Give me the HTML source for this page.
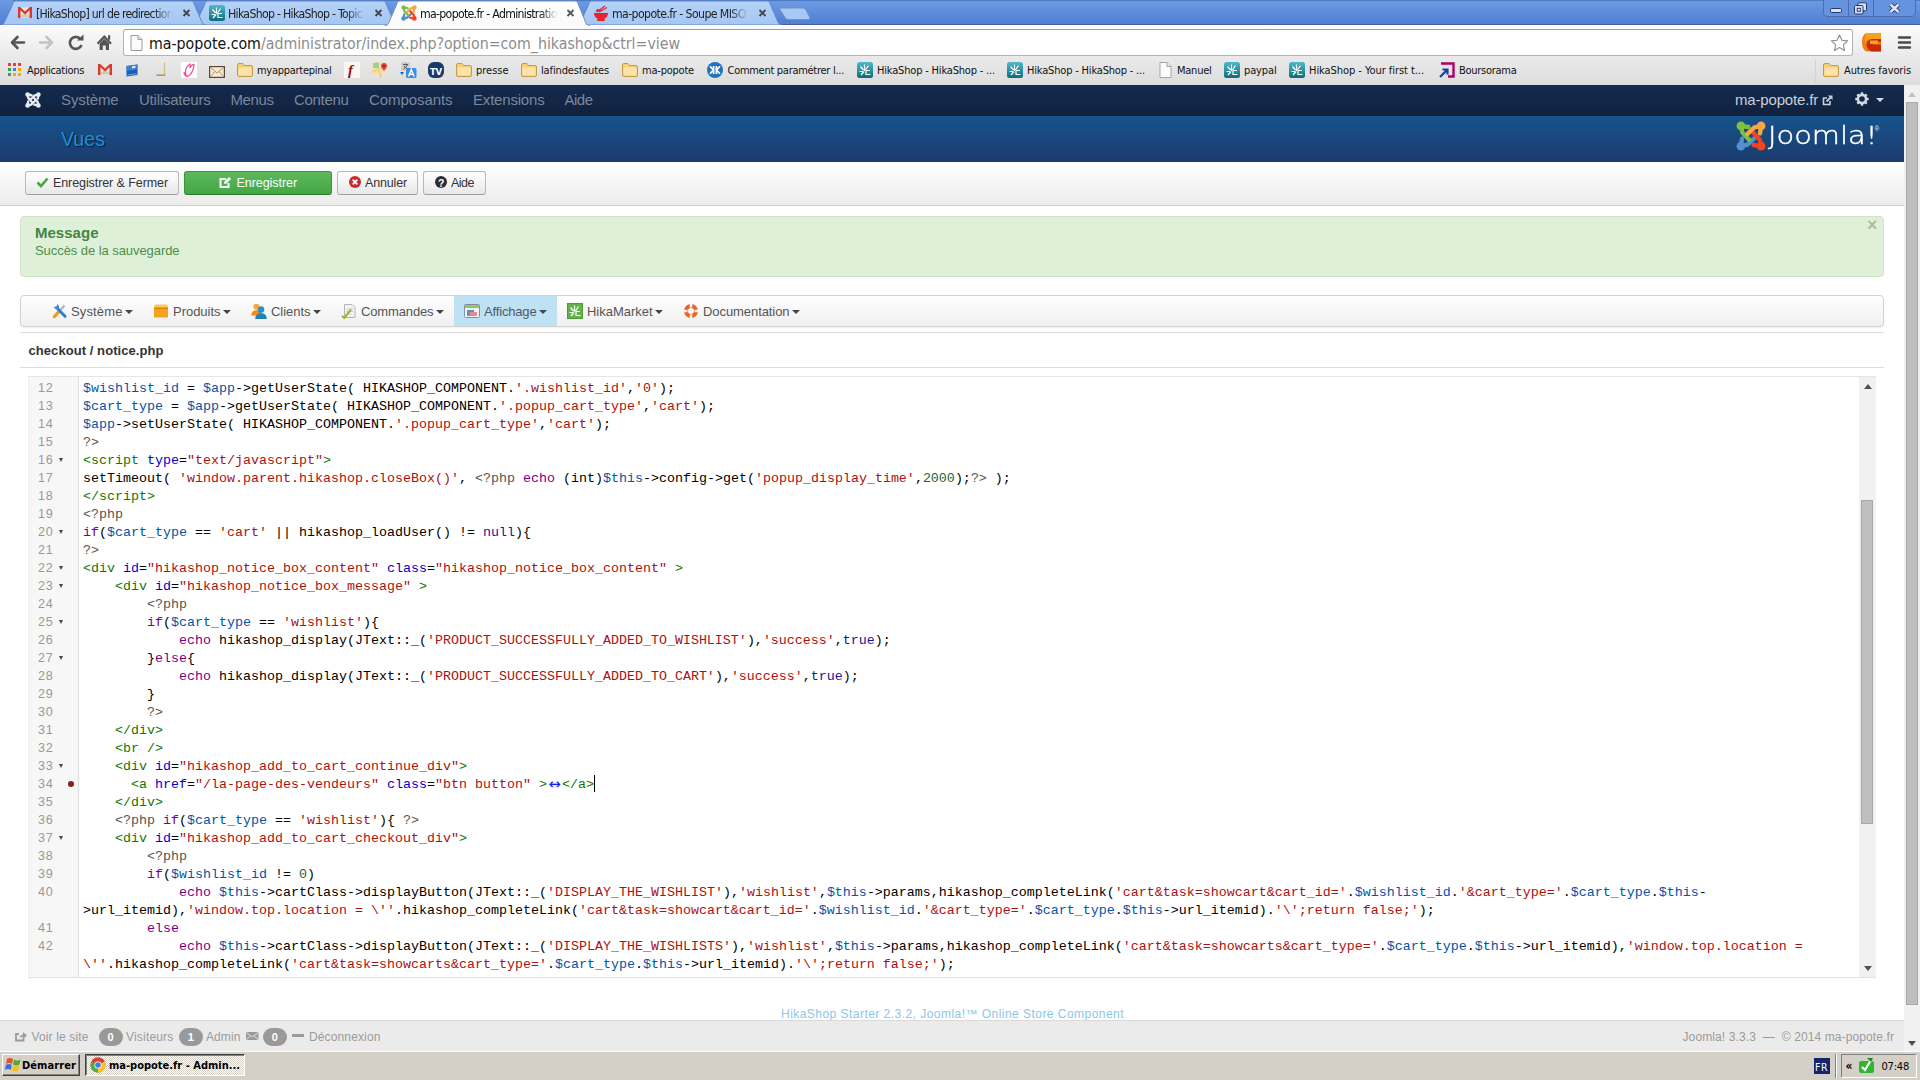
<!DOCTYPE html>
<html lang="fr">
<head>
<meta charset="utf-8">
<title>ma-popote.fr - Administration</title>
<style>
*{box-sizing:border-box;margin:0;padding:0}
html,body{width:1920px;height:1080px;overflow:hidden;background:#fff}
body{position:relative;font-family:"Liberation Sans",Arial,sans-serif;font-size:13px;color:#333}
.abs,.tx,svg.ic{position:absolute}
.tx{white-space:pre}
/* browser chrome */
#tabstrip{left:0;top:0;width:1920px;height:25px;background:linear-gradient(#6d9be3,#4f7ed3)}
#navtool{left:0;top:25px;width:1920px;height:31px;background:linear-gradient(#fcfcfc,#eaeaea)}
#bmbar{left:0;top:56px;width:1920px;height:29px;background:linear-gradient(#eaeaea,#dddddd)}
#url{left:123px;top:29px;width:1730px;height:27px;background:#fff;border:1px solid #b4b4b4;border-top-color:#9e9e9e;border-radius:3px}
/* joomla */
#jnav{left:0;top:85px;width:1904px;height:31px;background:linear-gradient(#142b50,#10213c)}
#jhead{left:0;top:116px;width:1904px;height:46px;background:linear-gradient(#17538c,#1b3b6d)}
#jsub{left:0;top:162px;width:1904px;height:44px;background:linear-gradient(#ffffff,#ececec);border-bottom:1px solid #d0d0d0}
.btn{height:24px;top:171px;border:1px solid #b8b8b8;border-bottom-color:#a0a0a0;border-radius:3px;background:linear-gradient(#ffffff,#e8e8e8)}
.btn.g{border-color:#3f9a3f #3b933b #2f7d2f;background:linear-gradient(#5cb85c,#44a744)}
#alert{left:20px;top:216px;width:1864px;height:61px;background:#dff0d8;border:1px solid #d1e5c4;border-radius:4px}
#hmenu{left:20px;top:295px;width:1864px;height:32px;border:1px solid #d2d2d2;border-radius:4px;background:linear-gradient(#ffffff,#f0f0f0);box-shadow:0 1px 2px rgba(0,0,0,.06)}
#hact{left:454px;top:296px;width:103px;height:30px;background:#bfe1f4}
.hl{height:1px;background:#dcdcdc;left:20px;width:1864px}
.car{width:0;height:0;border-left:4px solid transparent;border-right:4px solid transparent;border-top:4px solid #444;top:310px}
/* editor */
#ed{left:28px;top:376px;width:1848px;height:602px;border-top:1px solid #e6e6e6;border-bottom:1px solid #e2e2e2;background:#fff;overflow:hidden}
#gut{left:0;top:0;width:51px;height:600px;background:#f7f7f7;border-right:1px solid #ddd;border-left:1px solid #eee}
.ln{position:absolute;left:0;width:25.5px;text-align:right;font-size:12.6px;line-height:18px;color:#999;height:18px;letter-spacing:.7px;white-space:nowrap;margin-top:-1px}
.fd{position:absolute;left:31px;width:0;height:0;border-left:2.75px solid transparent;border-right:2.75px solid transparent;border-top:4px solid #444;margin-top:6px}
.dot{position:absolute;left:40px;width:6.4px;height:6.4px;border-radius:4px;background:#8b1c1c}
.cl{position:absolute;left:55px;font-family:"Liberation Mono",monospace;font-size:13.3333px;line-height:18px;height:18px;white-space:pre;color:#000}
.v{color:#0055aa}.s{color:#aa1111}.k{color:#770088}.t{color:#117700}.a{color:#0000cc}.m{color:#555555}.n{color:#116644}.at{color:#221199}
.cur{display:inline-block;width:1px;height:17px;background:#000;vertical-align:top;margin-top:-1px}
.hr{font-family:"DejaVu Sans",sans-serif;font-size:14.5px;display:inline-block;width:15px;text-align:center;line-height:16px;height:18px;vertical-align:top;margin-top:0px;color:#1a1aff;text-shadow:0 0 2px #b8b8ff;overflow:hidden}
#esb{left:1831px;top:0;width:17px;height:600px;background:#f1f1f1}
#esbt{left:1833px;top:123px;width:12px;height:324px;background:#bfbfbf;border:1px solid #a9a9a9}
/* status / taskbar */
#status{left:0;top:1020px;width:1904px;height:31px;background:#ebebeb;border-top:1px solid #d9d9d9}
.bdg{top:1028px;height:18px;width:24px;border-radius:9px;background:#999}
#task{left:0;top:1051px;width:1920px;height:29px;background:#d4d0c8;border-top:1px solid #fff}
#vsb{left:1904px;top:85px;width:16px;height:966px;background:#f1f1f1}
#vsbt{left:1906px;top:102px;width:12px;height:903px;background:#bfbfbf;border:1px solid #a9a9a9}
</style>
</head>
<body>
<!-- BROWSER CHROME -->
<div id="tabstrip" class="abs"></div>
<div id="navtool" class="abs"></div>
<div id="bmbar" class="abs"></div>
<svg class="ic" style="left:0;top:0" width="1920" height="26" viewBox="0 0 1920 26">
<defs><linearGradient id="tg" x1="0" y1="0" x2="0" y2="1"><stop offset="0" stop-color="#b6d3fa"/><stop offset="1" stop-color="#a3c6f2"/></linearGradient>
<linearGradient id="ta" x1="0" y1="0" x2="0" y2="1"><stop offset="0" stop-color="#ffffff"/><stop offset="1" stop-color="#fafafa"/></linearGradient></defs>
<rect x="0" y="24" width="1920" height="1" fill="#41629f"/>
<rect x="13" y="0" width="1907" height="0.8" fill="#4670bc"/>
<path d="M576.5,25 C579,25 580,23.5 581,21 L588,6 C589,3 589.5,1 592,1 L767,1 C769.5,1 770,3 771,6 L777.5,21 C778.5,23.5 779.5,25 782,25 Z" fill="url(#tg)" stroke="#6389c9" stroke-width="1"/>
<path d="M192.5,25 C195,25 196,23.5 197,21 L204,6 C205,3 205.5,1 208,1 L383,1 C385.5,1 386,3 387,6 L393.5,21 C394.5,23.5 395.5,25 398,25 Z" fill="url(#tg)" stroke="#6389c9" stroke-width="1"/>
<path d="M0.5,25 C3,25 4,23.5 5,21 L12,6 C13,3 13.5,1 16,1 L191,1 C193.5,1 194,3 195,6 L201.5,21 C202.5,23.5 203.5,25 206,25 Z" fill="url(#tg)" stroke="#6389c9" stroke-width="1"/>
<path d="M780.5,8 L803,8 Q805,8 806,10 L810,18 Q810.5,19.5 808.5,19.5 L788,19.5 Q786,19.5 785,17.5 L780,9.5 Q779.5,8 780.5,8Z" fill="#a9c9f4" stroke="#6b8fcd" stroke-width="1"/>
<rect x="0" y="25" width="1920" height="1" fill="#fff"/>
<path d="M384.5,26 C387,26 388,24.5 389,22 L396,6 C397,3 397.5,1 400,1 L575,1 C577.5,1 578,3 579,6 L585.5,22 C586.5,24.5 587.5,26 590,26 Z" fill="url(#ta)" stroke="#6f8fbe" stroke-width="1"/>
<rect x="387" y="25" width="201" height="1.5" fill="#fbfbfb"/>
<path d="M1823.5,0 V13 Q1823.5,16.5 1827,16.5 H1912 Q1915.5,16.5 1915.5,13 V0" fill="#6593df" stroke="#4a6db0" stroke-width="1"/>
<path d="M1848.5,0V16 M1873.5,0V16" stroke="#4a6db0" stroke-width="1"/>
<rect x="1830.5" y="8.5" width="11" height="4" rx="1.2" fill="#d5e2f8" stroke="#22386a" stroke-width="1"/>
<rect x="1858" y="2.8" width="8.5" height="8" rx="1" fill="#d5e2f8" stroke="#22386a" stroke-width="1"/><rect x="1854.5" y="5.5" width="8.5" height="8.5" rx="1" fill="#d5e2f8" stroke="#22386a" stroke-width="1"/><rect x="1857.3" y="8.3" width="3" height="3" fill="#eef3fc" stroke="#22386a" stroke-width="1"/>
<path d="M1890.5,4.5 L1898.5,12 M1898.5,4.5 L1890.5,12" stroke="#22386a" stroke-width="4.4" fill="none"/><path d="M1890.5,4.5 L1898.5,12 M1898.5,4.5 L1890.5,12" stroke="#dbe6f9" stroke-width="2.4" fill="none"/>
<path d="M183.5,10 l6,6 m0,-6 l-6,6" stroke="#444" stroke-width="1.8" fill="none"/>
<path d="M375.5,10 l6,6 m0,-6 l-6,6" stroke="#444" stroke-width="1.8" fill="none"/>
<path d="M567.5,10 l6,6 m0,-6 l-6,6" stroke="#555" stroke-width="1.8" fill="none"/>
<path d="M759.5,10 l6,6 m0,-6 l-6,6" stroke="#444" stroke-width="1.8" fill="none"/>
</svg>
<svg class="ic" style="left:18px;top:7px" width="14" height="11.2" viewBox="0 0 15 12"><rect x="0.5" y="0.5" width="14" height="11" fill="#ece8dc"/><path d="M1,11 L7.5,5.5 L14,11Z" fill="#cfc9b8"/><path d="M0,12V0h2.2l5.3,4.8L12.8,0H15v12h-2.6V3.6L7.5,8 2.6,3.6V12z" fill="#d8392b"/></svg><svg class="ic" style="left:209px;top:5px" width="16" height="16" viewBox="0 0 16 16"><defs><linearGradient id="hk209" x1="0" y1="0" x2="0" y2="1"><stop offset="0" stop-color="#52b8c8"/><stop offset="1" stop-color="#0d6c7c"/></linearGradient></defs><rect width="16" height="16" rx="2.5" fill="url(#hk209)"/><path d="M7.5,2.5 V9 M3.5,4.5 L6.5,8 M11.5,3.5 L8.5,8 M2.5,9.5 H6 M7,9.5 L4,13 M9,8.5 V12.5 H13.5 M9,8.5H13" stroke="#fff" stroke-width="1.2" fill="none"/></svg><svg class="ic" style="left:401px;top:5px" width="16" height="16" viewBox="0 0 16 16"><path d="M2.6,13.4 L3.2,9.4 M2.6,13.4 L6.2,12.6 L10,9" stroke="#5091cd" stroke-width="2.3" stroke-linecap="round" stroke-linejoin="round" fill="none"/><circle cx="2.6" cy="13.4" r="2.3" fill="#5091cd"/><path d="M2.6,2.6 L6.6,3.2 M2.6,2.6 L3.4,6.2 L7,10" stroke="#7ac143" stroke-width="2.3" stroke-linecap="round" stroke-linejoin="round" fill="none"/><circle cx="2.6" cy="2.6" r="2.3" fill="#7ac143"/><path d="M13.4,13.4 L9.4,12.8 M13.4,13.4 L12.6,9.8 L9,6" stroke="#f44321" stroke-width="2.3" stroke-linecap="round" stroke-linejoin="round" fill="none"/><circle cx="13.4" cy="13.4" r="2.3" fill="#f44321"/><path d="M13.4,2.6 L12.8,6.6 M13.4,2.6 L9.8,3.4 L6,7" stroke="#f9a541" stroke-width="2.3" stroke-linecap="round" stroke-linejoin="round" fill="none"/><circle cx="13.4" cy="2.6" r="2.3" fill="#f9a541"/></svg><svg class="ic" style="left:593px;top:5px" width="16" height="16" viewBox="0 0 16 16"><path d="M1,8 H15 C15,12 12,14.5 8,14.5 C4,14.5 1,12 1,8Z" fill="#e8232b"/><rect x="4" y="14" width="8" height="2" rx="1" fill="#e8232b"/><path d="M4,7 L12,1 M6,7 L14,2.5" stroke="#e8232b" stroke-width="1.3"/><path d="M3,6.5 Q5,3 7.5,6.5" stroke="#e8232b" stroke-width="1.5" fill="none"/></svg>
<div class="tx" style="left:36px;top:5.68px;font-family:'DejaVu Sans Condensed','DejaVu Sans',sans-serif;font-size:12.2px;line-height:16px;height:16px;letter-spacing:-0.723px;width:137px;overflow:hidden;color:#222;-webkit-mask-image:linear-gradient(90deg,#000 118px,transparent 137px);">[HikaShop] url de redirection</div><div class="tx" style="left:228px;top:5.68px;font-family:'DejaVu Sans Condensed','DejaVu Sans',sans-serif;font-size:12.2px;line-height:16px;height:16px;letter-spacing:-0.692px;width:137px;overflow:hidden;color:#222;-webkit-mask-image:linear-gradient(90deg,#000 118px,transparent 137px);">HikaShop - HikaShop - Topic:</div><div class="tx" style="left:420px;top:5.68px;font-family:'DejaVu Sans Condensed','DejaVu Sans',sans-serif;font-size:12.2px;line-height:16px;height:16px;letter-spacing:-0.680px;width:138px;overflow:hidden;color:#111;-webkit-mask-image:linear-gradient(90deg,#000 120px,transparent 138px);">ma-popote.fr - Administration</div><div class="tx" style="left:612px;top:5.68px;font-family:'DejaVu Sans Condensed','DejaVu Sans',sans-serif;font-size:12.2px;line-height:16px;height:16px;letter-spacing:-0.594px;width:138px;overflow:hidden;color:#222;-webkit-mask-image:linear-gradient(90deg,#000 118px,transparent 136px);">ma-popote.fr - Soupe MISO -</div>
<svg class="ic" style="left:0;top:26px" width="124" height="31" viewBox="0 26 124 31"><path d="M24,42.5 H13 M17.5,37 L12,42.5 L17.5,48" stroke="#555" stroke-width="2.6" fill="none" stroke-linecap="round" stroke-linejoin="round"/><path d="M40,42.5 H51 M46.5,37 L52,42.5 L46.5,48" stroke="#c4c4c4" stroke-width="2.6" fill="none" stroke-linecap="round" stroke-linejoin="round"/><path d="M80.5,39 A6,6 0 1 0 81.5,45" stroke="#555" stroke-width="2.6" fill="none"/><path d="M77,40.5 H83.5 V34.5Z" fill="#555"/><path d="M97.6,43.8 L104.3,36.6 L111,43.8" stroke="#555" stroke-width="2.3" fill="none" stroke-linejoin="miter"/><path d="M99.6,43.5 L104.3,38.8 L109,43.5 V50 H105.8 V45.5 H102.8 V50 H99.6Z" fill="#555"/><rect x="108" y="35.2" width="2.2" height="4.5" fill="#555"/></svg>
<div id="url" class="abs"></div>
<svg class="ic" style="left:130px;top:35px" width="13" height="16" viewBox="0 0 13 16"><path d="M1,0.5 H8 L12,4.5 V15.5 H1Z" fill="#fdfdfd" stroke="#9a9a9a" stroke-width="1"/><path d="M8,0.5 V4.5 H12" fill="#e4e4e4" stroke="#9a9a9a" stroke-width="1"/></svg><div class="tx" style="left:149px;top:32.93px;font-family:'DejaVu Sans Condensed','DejaVu Sans',sans-serif;font-size:15.8px;line-height:21px;height:21px;letter-spacing:-0.028px;color:#111;">ma-popote.com<span style="color:#8c8c8c">/administrator/index.php?option=com_hikashop&amp;ctrl=view</span></div>
<svg class="ic" style="left:1828px;top:32px" width="90" height="24" viewBox="1828 32 90 24"><path d="M1839.5,35 L1841.9,40.3 L1847.6,40.9 L1843.3,44.8 L1844.5,50.4 L1839.5,47.5 L1834.5,50.4 L1835.7,44.8 L1831.4,40.9 L1837.1,40.3Z" fill="#fff" stroke="#8e8e8e" stroke-width="1.1" stroke-linejoin="round"/><path d="M1866,33 H1881 V51.5 H1866 Q1862,49 1862,42 Q1862,35.5 1866,33Z" fill="#f47b10"/><path d="M1866,33 H1881 V39 H1871 Q1866,39 1865,44 Q1864,38 1866,33Z" fill="#f9a01e"/><path d="M1881,39 H1872 Q1866.5,40 1866.5,45 Q1867,50 1872,51.5 H1881 V44.5 H1873 V42 H1881Z" fill="#c62a08"/><rect x="1870" y="40.5" width="8" height="3.4" fill="#f8a21c"/><path d="M1899,37.5 H1910 M1899,42.5 H1910 M1899,47.5 H1910" stroke="#4a4a4a" stroke-width="2.4" stroke-linecap="round"/></svg>
<svg class="ic" style="left:8px;top:63px" width="13" height="13" viewBox="0 0 13 13"><rect x="0" y="0" width="3" height="3" fill="#e8403a"/><rect x="5" y="0" width="3" height="3" fill="#e8403a"/><rect x="10" y="0" width="3" height="3" fill="#e8403a"/><rect x="0" y="5" width="3" height="3" fill="#38a04a"/><rect x="5" y="5" width="3" height="3" fill="#3c82e8"/><rect x="10" y="5" width="3" height="3" fill="#f6a800"/><rect x="0" y="10" width="3" height="3" fill="#38a04a"/><rect x="5" y="10" width="3" height="3" fill="#f6a800"/><rect x="10" y="10" width="3" height="3" fill="#f6a800"/></svg><div class="tx" style="left:27px;top:64.09px;font-family:'DejaVu Sans Condensed','DejaVu Sans',sans-serif;font-size:11px;line-height:14px;height:14px;letter-spacing:-0.288px;color:#111;">Applications</div><svg class="ic" style="left:98px;top:64px" width="14" height="11.2" viewBox="0 0 15 12"><rect x="0.5" y="0.5" width="14" height="11" fill="#ece8dc"/><path d="M1,11 L7.5,5.5 L14,11Z" fill="#cfc9b8"/><path d="M0,12V0h2.2l5.3,4.8L12.8,0H15v12h-2.6V3.6L7.5,8 2.6,3.6V12z" fill="#d8392b"/></svg><svg class="ic" style="left:126px;top:64px" width="13" height="13" viewBox="0 0 13 13"><path d="M0.5,2 L11.5,0.5 V11 L0.5,12.5Z" fill="#1d5cb5"/><path d="M0.5,2 L11.5,0.5 V5 L0.5,7Z" fill="#3a80d4"/><path d="M6,2.3 l3.5,-.6 v2.2 l-3.5,.6z" fill="#d5e6fa"/><path d="M1.5,11 L10.5,9.8" stroke="#6aa2e6" stroke-width="1"/></svg><svg class="ic" style="left:155px;top:62px" width="12" height="16" viewBox="0 0 12 16"><path d="M9.5,0.5 V13" stroke="#d8bd85" stroke-width="1.3" fill="none"/><path d="M1.5,13.2H10.2" stroke="#b8934c" stroke-width="1.6"/></svg><svg class="ic" style="left:181px;top:62px" width="16" height="16" viewBox="0 0 16 16"><rect width="16" height="16" fill="#fff"/><path d="M9,2 Q5,5 4.5,9 Q4,13 6,14.5 Q9,14 11,10 Q13,6 13,2.5 Q11,2 9,6 Q9.5,3 9,2Z M6,14.5 Q3,13 3,10" stroke="#f0529c" stroke-width="1.3" fill="none"/></svg><svg class="ic" style="left:209px;top:66px" width="16" height="12" viewBox="0 0 16 12"><rect x="0.6" y="0.6" width="14.8" height="10.8" fill="#f6ead6" stroke="#5a4632" stroke-width="1.2"/><path d="M1,1 L8,7 L15,1 M1,11 L6,5.5 M15,11 L10,5.5" stroke="#b89468" stroke-width="1" fill="none"/></svg><svg class="ic" style="left:237px;top:63px" width="16" height="14" viewBox="0 0 16 14"><path d="M0.5,2 Q0.5,0.5 2,0.5 H6 L7.5,2.5 H14 Q15.5,2.5 15.5,4 V12 Q15.5,13.5 14,13.5 H2 Q0.5,13.5 0.5,12Z" fill="#f5cf7c" stroke="#c79a45" stroke-width="1"/><path d="M1.5,4.5 H14.5 V12 Q14.5,12.5 14,12.5 H2 Q1.5,12.5 1.5,12Z" fill="#fde4a6"/></svg><div class="tx" style="left:257px;top:64.09px;font-family:'DejaVu Sans Condensed','DejaVu Sans',sans-serif;font-size:11px;line-height:14px;height:14px;letter-spacing:-0.276px;color:#111;">myappartepinal</div><svg class="ic" style="left:344px;top:62px" width="16" height="16" viewBox="0 0 16 16"><rect width="16" height="16" fill="#fbf6f2"/></svg><div class="tx" style="left:348px;top:59.94px;font-family:'Liberation Serif',serif;font-size:15px;line-height:20px;height:20px;font-weight:700;color:#8e1010;font-style:italic;">f</div><svg class="ic" style="left:372px;top:62px" width="16" height="16" viewBox="0 0 16 16"><rect width="16" height="16" rx="2" fill="#e6e2d6"/><path d="M0,10 L16,4 M5,0 L9,16" stroke="#f7d560" stroke-width="2.2"/><rect x="1" y="1" width="6" height="5" fill="#a5cf8c"/><path d="M12,1 a3,3 0 0 1 3,3 q0,2 -3,5 q-3,-3 -3,-5 a3,3 0 0 1 3,-3z" fill="#e0443a"/><circle cx="12" cy="4" r="1.1" fill="#7a1a14"/></svg><svg class="ic" style="left:400px;top:62px" width="17" height="16" viewBox="0 0 17 16"><rect x="1" y="0" width="9" height="9" rx="1" fill="#cfcfcf"/><path d="M3,2.5H8M5.5,1.5V3M3.5,7Q6,6 7.5,2.5M4,4Q5.5,6.5 8,7" stroke="#555" stroke-width="1" fill="none"/><rect x="6" y="6" width="10.5" height="10" rx="1.5" fill="#3c8fe8"/><path d="M8.5,14.5 L11.3,7.5 L14,14.5 M9.5,12.3H13" stroke="#fff" stroke-width="1.4" fill="none"/><path d="M0,10 l4,0 l-2,3z" fill="#1d64c2"/></svg><svg class="ic" style="left:428px;top:62px" width="16" height="16" viewBox="0 0 16 16"><rect width="16" height="16" rx="6" fill="#17396f"/></svg><div class="tx" style="left:430px;top:65.61px;font-family:'DejaVu Sans Condensed','DejaVu Sans',sans-serif;font-size:9.5px;line-height:12px;height:12px;font-weight:700;letter-spacing:-0.227px;color:#fff;">TV</div><svg class="ic" style="left:456px;top:63px" width="16" height="14" viewBox="0 0 16 14"><path d="M0.5,2 Q0.5,0.5 2,0.5 H6 L7.5,2.5 H14 Q15.5,2.5 15.5,4 V12 Q15.5,13.5 14,13.5 H2 Q0.5,13.5 0.5,12Z" fill="#f5cf7c" stroke="#c79a45" stroke-width="1"/><path d="M1.5,4.5 H14.5 V12 Q14.5,12.5 14,12.5 H2 Q1.5,12.5 1.5,12Z" fill="#fde4a6"/></svg><div class="tx" style="left:476px;top:64.09px;font-family:'DejaVu Sans Condensed','DejaVu Sans',sans-serif;font-size:11px;line-height:14px;height:14px;letter-spacing:-0.018px;color:#111;">presse</div><svg class="ic" style="left:521px;top:63px" width="16" height="14" viewBox="0 0 16 14"><path d="M0.5,2 Q0.5,0.5 2,0.5 H6 L7.5,2.5 H14 Q15.5,2.5 15.5,4 V12 Q15.5,13.5 14,13.5 H2 Q0.5,13.5 0.5,12Z" fill="#f5cf7c" stroke="#c79a45" stroke-width="1"/><path d="M1.5,4.5 H14.5 V12 Q14.5,12.5 14,12.5 H2 Q1.5,12.5 1.5,12Z" fill="#fde4a6"/></svg><div class="tx" style="left:541px;top:64.09px;font-family:'DejaVu Sans Condensed','DejaVu Sans',sans-serif;font-size:11px;line-height:14px;height:14px;letter-spacing:-0.129px;color:#111;">lafindesfautes</div><svg class="ic" style="left:622px;top:63px" width="16" height="14" viewBox="0 0 16 14"><path d="M0.5,2 Q0.5,0.5 2,0.5 H6 L7.5,2.5 H14 Q15.5,2.5 15.5,4 V12 Q15.5,13.5 14,13.5 H2 Q0.5,13.5 0.5,12Z" fill="#f5cf7c" stroke="#c79a45" stroke-width="1"/><path d="M1.5,4.5 H14.5 V12 Q14.5,12.5 14,12.5 H2 Q1.5,12.5 1.5,12Z" fill="#fde4a6"/></svg><div class="tx" style="left:642px;top:64.09px;font-family:'DejaVu Sans Condensed','DejaVu Sans',sans-serif;font-size:11px;line-height:14px;height:14px;letter-spacing:-0.214px;color:#111;">ma-popote</div><svg class="ic" style="left:707px;top:62px" width="16" height="16" viewBox="0 0 16 16"><circle cx="8" cy="8" r="8" fill="#1f74bd"/><path d="M6.6,4V12M9.4,4V12M3,4.2L6.4,8L3,11.8M13,4.2L9.6,8L13,11.8" stroke="#fff" stroke-width="1.7" fill="none"/></svg><div class="tx" style="left:727.5px;top:64.09px;font-family:'DejaVu Sans Condensed','DejaVu Sans',sans-serif;font-size:11px;line-height:14px;height:14px;letter-spacing:-0.284px;color:#111;">Comment paramétrer l...</div><svg class="ic" style="left:857px;top:62px" width="16" height="16" viewBox="0 0 16 16"><defs><linearGradient id="hk857" x1="0" y1="0" x2="0" y2="1"><stop offset="0" stop-color="#52b8c8"/><stop offset="1" stop-color="#0d6c7c"/></linearGradient></defs><rect width="16" height="16" rx="2.5" fill="url(#hk857)"/><path d="M7.5,2.5 V9 M3.5,4.5 L6.5,8 M11.5,3.5 L8.5,8 M2.5,9.5 H6 M7,9.5 L4,13 M9,8.5 V12.5 H13.5 M9,8.5H13" stroke="#fff" stroke-width="1.2" fill="none"/></svg><div class="tx" style="left:877px;top:64.09px;font-family:'DejaVu Sans Condensed','DejaVu Sans',sans-serif;font-size:11px;line-height:14px;height:14px;letter-spacing:-0.181px;color:#111;">HikaShop - HikaShop - ...</div><svg class="ic" style="left:1007px;top:62px" width="16" height="16" viewBox="0 0 16 16"><defs><linearGradient id="hk1007" x1="0" y1="0" x2="0" y2="1"><stop offset="0" stop-color="#52b8c8"/><stop offset="1" stop-color="#0d6c7c"/></linearGradient></defs><rect width="16" height="16" rx="2.5" fill="url(#hk1007)"/><path d="M7.5,2.5 V9 M3.5,4.5 L6.5,8 M11.5,3.5 L8.5,8 M2.5,9.5 H6 M7,9.5 L4,13 M9,8.5 V12.5 H13.5 M9,8.5H13" stroke="#fff" stroke-width="1.2" fill="none"/></svg><div class="tx" style="left:1027px;top:64.09px;font-family:'DejaVu Sans Condensed','DejaVu Sans',sans-serif;font-size:11px;line-height:14px;height:14px;letter-spacing:-0.181px;color:#111;">HikaShop - HikaShop - ...</div><svg class="ic" style="left:1159px;top:62px" width="13" height="16" viewBox="0 0 13 16"><path d="M1,0.5 H8 L12,4.5 V15.5 H1Z" fill="#fdfdfd" stroke="#a5a5a5" stroke-width="1"/><path d="M8,0.5 V4.5 H12" fill="#e8e8e8" stroke="#a5a5a5" stroke-width="1"/></svg><div class="tx" style="left:1177px;top:64.09px;font-family:'DejaVu Sans Condensed','DejaVu Sans',sans-serif;font-size:11px;line-height:14px;height:14px;letter-spacing:-0.250px;color:#111;">Manuel</div><svg class="ic" style="left:1224px;top:62px" width="16" height="16" viewBox="0 0 16 16"><defs><linearGradient id="hk1224" x1="0" y1="0" x2="0" y2="1"><stop offset="0" stop-color="#52b8c8"/><stop offset="1" stop-color="#0d6c7c"/></linearGradient></defs><rect width="16" height="16" rx="2.5" fill="url(#hk1224)"/><path d="M7.5,2.5 V9 M3.5,4.5 L6.5,8 M11.5,3.5 L8.5,8 M2.5,9.5 H6 M7,9.5 L4,13 M9,8.5 V12.5 H13.5 M9,8.5H13" stroke="#fff" stroke-width="1.2" fill="none"/></svg><div class="tx" style="left:1244px;top:64.09px;font-family:'DejaVu Sans Condensed','DejaVu Sans',sans-serif;font-size:11px;line-height:14px;height:14px;letter-spacing:-0.135px;color:#111;">paypal</div><svg class="ic" style="left:1289px;top:62px" width="16" height="16" viewBox="0 0 16 16"><defs><linearGradient id="hk1289" x1="0" y1="0" x2="0" y2="1"><stop offset="0" stop-color="#52b8c8"/><stop offset="1" stop-color="#0d6c7c"/></linearGradient></defs><rect width="16" height="16" rx="2.5" fill="url(#hk1289)"/><path d="M7.5,2.5 V9 M3.5,4.5 L6.5,8 M11.5,3.5 L8.5,8 M2.5,9.5 H6 M7,9.5 L4,13 M9,8.5 V12.5 H13.5 M9,8.5H13" stroke="#fff" stroke-width="1.2" fill="none"/></svg><div class="tx" style="left:1309px;top:64.09px;font-family:'DejaVu Sans Condensed','DejaVu Sans',sans-serif;font-size:11px;line-height:14px;height:14px;letter-spacing:-0.056px;color:#111;">HikaShop - Your first t...</div><svg class="ic" style="left:1439px;top:62px" width="16" height="16" viewBox="0 0 16 16"><path d="M2,1.5 H14.5 V14.5 H9" stroke="#b0006a" stroke-width="2.4" fill="none"/><path d="M1,15 L8,8 M3.5,7.5 H8.5 V12.5" stroke="#1a3fa0" stroke-width="2.2" fill="none"/></svg><div class="tx" style="left:1459px;top:64.09px;font-family:'DejaVu Sans Condensed','DejaVu Sans',sans-serif;font-size:11px;line-height:14px;height:14px;letter-spacing:-0.273px;color:#111;">Boursorama</div><div class="abs" style="left:1815px;top:59px;width:1px;height:24px;background:#cfd4dc"></div><svg class="ic" style="left:1823px;top:63px" width="16" height="14" viewBox="0 0 16 14"><path d="M0.5,2 Q0.5,0.5 2,0.5 H6 L7.5,2.5 H14 Q15.5,2.5 15.5,4 V12 Q15.5,13.5 14,13.5 H2 Q0.5,13.5 0.5,12Z" fill="#f5cf7c" stroke="#c79a45" stroke-width="1"/><path d="M1.5,4.5 H14.5 V12 Q14.5,12.5 14,12.5 H2 Q1.5,12.5 1.5,12Z" fill="#fde4a6"/></svg><div class="tx" style="left:1844px;top:64.09px;font-family:'DejaVu Sans Condensed','DejaVu Sans',sans-serif;font-size:11px;line-height:14px;height:14px;letter-spacing:-0.112px;color:#111;">Autres favoris</div>
<!-- JOOMLA -->
<div id="jnav" class="abs"></div>
<div id="jhead" class="abs"></div>
<div id="jsub" class="abs"></div>
<svg class="ic" style="left:25px;top:92px" width="16" height="16" viewBox="0 0 16 16"><path d="M2.6,13.4 L3.2,9.4 M2.6,13.4 L6.2,12.6 L10,9" stroke="#e8ebf0" stroke-width="2.4" stroke-linecap="round" stroke-linejoin="round" fill="none"/><circle cx="2.6" cy="13.4" r="2.3" fill="#e8ebf0"/><path d="M2.6,2.6 L6.6,3.2 M2.6,2.6 L3.4,6.2 L7,10" stroke="#e8ebf0" stroke-width="2.4" stroke-linecap="round" stroke-linejoin="round" fill="none"/><circle cx="2.6" cy="2.6" r="2.3" fill="#e8ebf0"/><path d="M13.4,13.4 L9.4,12.8 M13.4,13.4 L12.6,9.8 L9,6" stroke="#e8ebf0" stroke-width="2.4" stroke-linecap="round" stroke-linejoin="round" fill="none"/><circle cx="13.4" cy="13.4" r="2.3" fill="#e8ebf0"/><path d="M13.4,2.6 L12.8,6.6 M13.4,2.6 L9.8,3.4 L6,7" stroke="#e8ebf0" stroke-width="2.4" stroke-linecap="round" stroke-linejoin="round" fill="none"/><circle cx="13.4" cy="2.6" r="2.3" fill="#e8ebf0"/></svg><div class="tx" style="left:61px;top:90.30px;font-family:'Liberation Sans',Arial,sans-serif;font-size:15px;line-height:20px;height:20px;letter-spacing:-0.123px;color:#7c879b;">Système</div><div class="tx" style="left:139px;top:90.30px;font-family:'Liberation Sans',Arial,sans-serif;font-size:15px;line-height:20px;height:20px;letter-spacing:-0.224px;color:#7c879b;">Utilisateurs</div><div class="tx" style="left:230.5px;top:90.30px;font-family:'Liberation Sans',Arial,sans-serif;font-size:15px;line-height:20px;height:20px;letter-spacing:-0.406px;color:#7c879b;">Menus</div><div class="tx" style="left:294px;top:90.30px;font-family:'Liberation Sans',Arial,sans-serif;font-size:15px;line-height:20px;height:20px;letter-spacing:-0.317px;color:#7c879b;">Contenu</div><div class="tx" style="left:369px;top:90.30px;font-family:'Liberation Sans',Arial,sans-serif;font-size:15px;line-height:20px;height:20px;letter-spacing:-0.072px;color:#7c879b;">Composants</div><div class="tx" style="left:473px;top:90.30px;font-family:'Liberation Sans',Arial,sans-serif;font-size:15px;line-height:20px;height:20px;letter-spacing:-0.188px;color:#7c879b;">Extensions</div><div class="tx" style="left:564.5px;top:90.30px;font-family:'Liberation Sans',Arial,sans-serif;font-size:15px;line-height:20px;height:20px;letter-spacing:-0.508px;color:#7c879b;">Aide</div><div class="tx" style="left:1735px;top:90.30px;font-family:'Liberation Sans',Arial,sans-serif;font-size:15px;line-height:20px;height:20px;letter-spacing:-0.171px;color:#c9d0db;">ma-popote.fr</div><svg class="ic" style="left:1822px;top:95px" width="11" height="11" viewBox="0 0 11 11"><path d="M8,6 V9.5 H1.5 V3 H5" stroke="#c9d0db" stroke-width="1.6" fill="none"/><path d="M4.5,6.5 L9,2" stroke="#c9d0db" stroke-width="1.8"/><path d="M6,0.5 H10.5 V5Z" fill="#c9d0db"/></svg><svg class="ic" style="left:1855px;top:92px" width="14" height="14" viewBox="0 0 14 14"><circle cx="7" cy="7" r="4.1" fill="none" stroke="#d4dae3" stroke-width="2.6"/><path d="M7,0.3V2.5M7,11.5V13.7M0.3,7H2.5M11.5,7H13.7M2.3,2.3L3.8,3.8M10.2,10.2L11.7,11.7M2.3,11.7L3.8,10.2M10.2,3.8L11.7,2.3" stroke="#d4dae3" stroke-width="2.4"/></svg><div class="abs car" style="left:1876px;top:98px;border-top-color:#d4dae3"></div>
<div class="tx" style="left:61px;top:126.74px;font-family:'Liberation Sans',Arial,sans-serif;font-size:19.5px;line-height:25px;height:25px;letter-spacing:0.066px;color:#1b8edb;text-shadow:1px 1px 1px rgba(0,0,0,.65);">Vues</div><svg class="ic" style="left:1735.5px;top:120.5px" width="30" height="30" viewBox="0 0 16 16"><path d="M2.6,13.4 L3.2,9.4 M2.6,13.4 L6.2,12.6 L10,9" stroke="#5091cd" stroke-width="2.3" stroke-linecap="round" stroke-linejoin="round" fill="none"/><circle cx="2.6" cy="13.4" r="2.3" fill="#5091cd"/><path d="M2.6,2.6 L6.6,3.2 M2.6,2.6 L3.4,6.2 L7,10" stroke="#7ac143" stroke-width="2.3" stroke-linecap="round" stroke-linejoin="round" fill="none"/><circle cx="2.6" cy="2.6" r="2.3" fill="#7ac143"/><path d="M13.4,13.4 L9.4,12.8 M13.4,13.4 L12.6,9.8 L9,6" stroke="#f44321" stroke-width="2.3" stroke-linecap="round" stroke-linejoin="round" fill="none"/><circle cx="13.4" cy="13.4" r="2.3" fill="#f44321"/><path d="M13.4,2.6 L12.8,6.6 M13.4,2.6 L9.8,3.4 L6,7" stroke="#f9a541" stroke-width="2.3" stroke-linecap="round" stroke-linejoin="round" fill="none"/><circle cx="13.4" cy="2.6" r="2.3" fill="#f9a541"/></svg><div class="tx" style="left:1768px;top:120.25px;font-family:'DejaVu Sans',sans-serif;font-size:24.7px;line-height:32px;height:32px;font-weight:200;color:#ffffff;transform:scaleX(1.17);transform-origin:0 0;-webkit-text-stroke:0.45px #fff;">Joomla!</div><div class="tx" style="left:1874.5px;top:124.75px;font-family:'Liberation Sans',Arial,sans-serif;font-size:6.5px;line-height:8px;height:8px;color:#dfe8f3;">®</div>
<div class="abs btn" style="left:25px;width:154px"></div><div class="abs btn g" style="left:184px;width:148px"></div><div class="abs btn" style="left:337px;width:81px"></div><div class="abs btn" style="left:423px;width:63px"></div>
<svg class="ic" style="left:36px;top:176px" width="13" height="12" viewBox="0 0 13 12"><path d="M1.5,6.5 L5,10 L11.5,2.5" stroke="#46a546" stroke-width="2.6" fill="none"/></svg><div class="tx" style="left:53px;top:174.67px;font-family:'Liberation Sans',Arial,sans-serif;font-size:12.5px;line-height:16px;height:16px;letter-spacing:-0.085px;color:#333;">Enregistrer &amp; Fermer</div><svg class="ic" style="left:219px;top:176px" width="13" height="13" viewBox="0 0 13 13"><path d="M9.5,7 V11 H1.5 V3 H7" stroke="#fff" stroke-width="2" fill="none"/><path d="M5,8 L5.5,5.5 L10,1 L12,3 L7.5,7.5Z" fill="#fff"/></svg><div class="tx" style="left:236.5px;top:174.67px;font-family:'Liberation Sans',Arial,sans-serif;font-size:12.5px;line-height:16px;height:16px;letter-spacing:-0.058px;color:#fff;">Enregistrer</div><svg class="ic" style="left:349px;top:176px" width="12" height="12" viewBox="0 0 12 12"><circle cx="6" cy="6" r="6" fill="#c92b2b"/><path d="M3.7,3.7 L8.3,8.3 M8.3,3.7 L3.7,8.3" stroke="#fff" stroke-width="1.9"/></svg><div class="tx" style="left:365px;top:174.67px;font-family:'Liberation Sans',Arial,sans-serif;font-size:12.5px;line-height:16px;height:16px;letter-spacing:-0.156px;color:#333;">Annuler</div><svg class="ic" style="left:435px;top:176px" width="12" height="12" viewBox="0 0 12 12"><circle cx="6" cy="6" r="6" fill="#2d2d2d"/></svg><div class="tx" style="left:438px;top:175.86px;font-family:'Liberation Sans',Arial,sans-serif;font-size:10.5px;line-height:14px;height:14px;font-weight:700;color:#fff;">?</div><div class="tx" style="left:451px;top:174.67px;font-family:'Liberation Sans',Arial,sans-serif;font-size:12.5px;line-height:16px;height:16px;letter-spacing:-0.508px;color:#333;">Aide</div>
<div id="alert" class="abs"></div>
<div class="tx" style="left:35px;top:223.30px;font-family:'Liberation Sans',Arial,sans-serif;font-size:15px;line-height:20px;height:20px;font-weight:700;letter-spacing:0.018px;color:#3f8742;">Message</div><div class="tx" style="left:35px;top:242.00px;font-family:'Liberation Sans',Arial,sans-serif;font-size:13px;line-height:17px;height:17px;letter-spacing:-0.065px;color:#4a8f4c;">Succès de la sauvegarde</div><div class="tx" style="left:1867px;top:213.94px;font-family:'Liberation Sans',Arial,sans-serif;font-size:17.5px;line-height:23px;height:23px;font-weight:700;color:#adbba6;">×</div>
<div id="hmenu" class="abs"></div><div id="hact" class="abs"></div>
<svg class="ic" style="left:52px;top:303px" width="16" height="16" viewBox="0 0 16 16"><path d="M12.5,2.5 L6,9.5" stroke="#aeb4bc" stroke-width="2"/><path d="M6.2,9.2 L2.3,13.7" stroke="#f39a1e" stroke-width="3.2" stroke-linecap="round"/><path d="M4.5,4.5 L13,13.3" stroke="#2f7fd0" stroke-width="3" stroke-linecap="round"/><path d="M1.3,3.8 A3.3,3.3 0 0 0 6.6,5.2 A3.3,3.3 0 0 0 5.2,0.9 L5,3.4 L3.4,4.6Z" fill="#3d8ada"/></svg><div class="tx" style="left:71px;top:303.00px;font-family:'Liberation Sans',Arial,sans-serif;font-size:13px;line-height:17px;height:17px;letter-spacing:0.132px;color:#555;">Système</div><div class="abs car" style="left:124.8px;border-top-color:#444"></div><svg class="ic" style="left:153px;top:303px" width="16" height="16" viewBox="0 0 16 16"><path d="M1,4 H15 V14.5 H1Z" fill="#f5a31c"/><path d="M2,1.5 H14 L15,4 H1Z" fill="#fbc65a"/><path d="M1,5.5H15" stroke="#d98208" stroke-width="1"/></svg><div class="tx" style="left:173px;top:303.00px;font-family:'Liberation Sans',Arial,sans-serif;font-size:13px;line-height:17px;height:17px;letter-spacing:-0.025px;color:#555;">Produits</div><div class="abs car" style="left:222.8px;border-top-color:#444"></div><svg class="ic" style="left:251px;top:303px" width="16" height="16" viewBox="0 0 16 16"><circle cx="5.5" cy="3.8" r="3" fill="#f6a63a"/><path d="M0.3,12.5 Q0.3,7.3 5.5,7.3 Q10.7,7.3 10.7,12.5Z" fill="#f08c1e"/><circle cx="10" cy="6.6" r="3.3" fill="#2f8fc4"/><path d="M4.2,16 Q4.2,10.2 10,10.2 Q15.8,10.2 15.8,16Z" fill="#2380b4"/></svg><div class="tx" style="left:271px;top:303.00px;font-family:'Liberation Sans',Arial,sans-serif;font-size:13px;line-height:17px;height:17px;letter-spacing:-0.036px;color:#555;">Clients</div><div class="abs car" style="left:312.8px;border-top-color:#444"></div><svg class="ic" style="left:341px;top:303px" width="16" height="16" viewBox="0 0 16 16"><path d="M3.5,1.5 H11 L14,4.5 V14.5 H3.5Z" fill="#f4f4f4" stroke="#b4b4b4" stroke-width="1"/><path d="M5.5,6H12M5.5,8.5H12M5.5,11H10" stroke="#c9c9c9" stroke-width="1"/><path d="M1,13 L3.5,15 L10,6.5" stroke="#7ab02c" stroke-width="1.8" fill="none"/><path d="M2,15.5 L9,7" stroke="#d8a838" stroke-width="1.2"/></svg><div class="tx" style="left:361px;top:303.00px;font-family:'Liberation Sans',Arial,sans-serif;font-size:13px;line-height:17px;height:17px;letter-spacing:-0.134px;color:#555;">Commandes</div><div class="abs car" style="left:435.8px;border-top-color:#444"></div><svg class="ic" style="left:464px;top:303px" width="16" height="16" viewBox="0 0 16 16"><rect x="0.5" y="1.5" width="15" height="13" rx="1" fill="#f2f6fa" stroke="#7d8fa6" stroke-width="1"/><rect x="1" y="2" width="14" height="3" fill="#9fc25a"/><rect x="3" y="7" width="7" height="6" fill="#5a8fd0"/><rect x="6" y="9" width="7" height="4" fill="#e88a8a"/></svg><div class="tx" style="left:484px;top:303.00px;font-family:'Liberation Sans',Arial,sans-serif;font-size:13px;line-height:17px;height:17px;letter-spacing:-0.163px;color:#4b5968;">Affichage</div><div class="abs car" style="left:538.8px;border-top-color:#3f4a55"></div><svg class="ic" style="left:567px;top:303px" width="16" height="16" viewBox="0 0 16 16"><rect width="16" height="16" fill="#4c9a3a"/><rect x="1" y="1" width="14" height="14" fill="#62b14a"/><path d="M7.5,2.5 V9 M3.5,4.5 L6.5,8 M11.5,3.5 L8.5,8 M2.5,9.5 H6 M7,9.5 L4,13 M9,8.5 V12.5 H13.5 M9,8.5H13" stroke="#fff" stroke-width="1.2" fill="none"/></svg><div class="tx" style="left:587px;top:303.00px;font-family:'Liberation Sans',Arial,sans-serif;font-size:13px;line-height:17px;height:17px;letter-spacing:-0.025px;color:#555;">HikaMarket</div><div class="abs car" style="left:654.8px;border-top-color:#444"></div><svg class="ic" style="left:683px;top:303px" width="16" height="16" viewBox="0 0 16 16"><circle cx="8" cy="8" r="5" fill="none" stroke="#e8622c" stroke-width="4"/><path d="M8,0.5V4.5M8,11.5V15.5M0.5,8H4.5M11.5,8H15.5" stroke="#fdf4ec" stroke-width="2.6"/></svg><div class="tx" style="left:703px;top:303.00px;font-family:'Liberation Sans',Arial,sans-serif;font-size:13px;line-height:17px;height:17px;letter-spacing:-0.073px;color:#555;">Documentation</div><div class="abs car" style="left:791.8px;border-top-color:#444"></div>
<div class="abs hl" style="top:332px"></div><div class="abs hl" style="top:367px"></div>
<div class="tx" style="left:28.5px;top:342.00px;font-family:'Liberation Sans',Arial,sans-serif;font-size:13px;line-height:17px;height:17px;font-weight:700;letter-spacing:0.065px;color:#333;">checkout / notice.php</div>
<!-- EDITOR -->
<div id="ed" class="abs"><div id="gut" class="abs"></div>
<div class="ln" style="top:3px">12</div>
<div class="cl" style="top:3px"><span class="v">$wishlist_id</span> = <span class="v">$app</span>-&gt;getUserState( HIKASHOP_COMPONENT.<span class="s">'.wishlist_id'</span>,<span class="s">'0'</span>);</div>
<div class="ln" style="top:21px">13</div>
<div class="cl" style="top:21px"><span class="v">$cart_type</span> = <span class="v">$app</span>-&gt;getUserState( HIKASHOP_COMPONENT.<span class="s">'.popup_cart_type'</span>,<span class="s">'cart'</span>);</div>
<div class="ln" style="top:39px">14</div>
<div class="cl" style="top:39px"><span class="v">$app</span>-&gt;setUserState( HIKASHOP_COMPONENT.<span class="s">'.popup_cart_type'</span>,<span class="s">'cart'</span>);</div>
<div class="ln" style="top:57px">15</div>
<div class="cl" style="top:57px"><span class="m">?&gt;</span></div>
<div class="ln" style="top:75px">16</div>
<div class="fd" style="top:75px"></div>
<div class="cl" style="top:75px"><span class="t">&lt;script</span> <span class="a">type</span>=<span class="s">"text/javascript"</span><span class="t">&gt;</span></div>
<div class="ln" style="top:93px">17</div>
<div class="cl" style="top:93px">setTimeout( <span class="s">'window.parent.hikashop.closeBox()'</span>, <span class="m">&lt;?php</span> <span class="k">echo</span> (int)<span class="v">$this</span>-&gt;config-&gt;get(<span class="s">'popup_display_time'</span>,<span class="n">2000</span>);<span class="m">?&gt;</span> );</div>
<div class="ln" style="top:111px">18</div>
<div class="cl" style="top:111px"><span class="t">&lt;/script&gt;</span></div>
<div class="ln" style="top:129px">19</div>
<div class="cl" style="top:129px"><span class="m">&lt;?php</span></div>
<div class="ln" style="top:147px">20</div>
<div class="fd" style="top:147px"></div>
<div class="cl" style="top:147px"><span class="k">if</span>(<span class="v">$cart_type</span> == <span class="s">'cart'</span> || hikashop_loadUser() != <span class="at">null</span>){</div>
<div class="ln" style="top:165px">21</div>
<div class="cl" style="top:165px"><span class="m">?&gt;</span></div>
<div class="ln" style="top:183px">22</div>
<div class="fd" style="top:183px"></div>
<div class="cl" style="top:183px"><span class="t">&lt;div</span> <span class="a">id</span>=<span class="s">"hikashop_notice_box_content"</span> <span class="a">class</span>=<span class="s">"hikashop_notice_box_content"</span> <span class="t">&gt;</span></div>
<div class="ln" style="top:201px">23</div>
<div class="fd" style="top:201px"></div>
<div class="cl" style="top:201px">    <span class="t">&lt;div</span> <span class="a">id</span>=<span class="s">"hikashop_notice_box_message"</span> <span class="t">&gt;</span></div>
<div class="ln" style="top:219px">24</div>
<div class="cl" style="top:219px">        <span class="m">&lt;?php</span></div>
<div class="ln" style="top:237px">25</div>
<div class="fd" style="top:237px"></div>
<div class="cl" style="top:237px">        <span class="k">if</span>(<span class="v">$cart_type</span> == <span class="s">'wishlist'</span>){</div>
<div class="ln" style="top:255px">26</div>
<div class="cl" style="top:255px">            <span class="k">echo</span> hikashop_display(JText::_(<span class="s">'PRODUCT_SUCCESSFULLY_ADDED_TO_WISHLIST'</span>),<span class="s">'success'</span>,<span class="at">true</span>);</div>
<div class="ln" style="top:273px">27</div>
<div class="fd" style="top:273px"></div>
<div class="cl" style="top:273px">        }<span class="k">else</span>{</div>
<div class="ln" style="top:291px">28</div>
<div class="cl" style="top:291px">            <span class="k">echo</span> hikashop_display(JText::_(<span class="s">'PRODUCT_SUCCESSFULLY_ADDED_TO_CART'</span>),<span class="s">'success'</span>,<span class="at">true</span>);</div>
<div class="ln" style="top:309px">29</div>
<div class="cl" style="top:309px">        }</div>
<div class="ln" style="top:327px">30</div>
<div class="cl" style="top:327px">        <span class="m">?&gt;</span></div>
<div class="ln" style="top:345px">31</div>
<div class="cl" style="top:345px">    <span class="t">&lt;/div&gt;</span></div>
<div class="ln" style="top:363px">32</div>
<div class="cl" style="top:363px">    <span class="t">&lt;br /&gt;</span></div>
<div class="ln" style="top:381px">33</div>
<div class="fd" style="top:381px"></div>
<div class="cl" style="top:381px">    <span class="t">&lt;div</span> <span class="a">id</span>=<span class="s">"hikashop_add_to_cart_continue_div"</span><span class="t">&gt;</span></div>
<div class="ln" style="top:399px">34</div>
<div class="dot" style="top:404px"></div>
<div class="cl" style="top:399px">      <span class="t">&lt;a</span> <span class="a">href</span>=<span class="s">"/la-page-des-vendeurs"</span> <span class="a">class</span>=<span class="s">"btn button"</span> <span class="t">&gt;</span><span class="at hr">↔</span><span class="t">&lt;/a&gt;</span><i class="cur"></i></div>
<div class="ln" style="top:417px">35</div>
<div class="cl" style="top:417px">    <span class="t">&lt;/div&gt;</span></div>
<div class="ln" style="top:435px">36</div>
<div class="cl" style="top:435px">    <span class="m">&lt;?php</span> <span class="k">if</span>(<span class="v">$cart_type</span> == <span class="s">'wishlist'</span>){ <span class="m">?&gt;</span></div>
<div class="ln" style="top:453px">37</div>
<div class="fd" style="top:453px"></div>
<div class="cl" style="top:453px">    <span class="t">&lt;div</span> <span class="a">id</span>=<span class="s">"hikashop_add_to_cart_checkout_div"</span><span class="t">&gt;</span></div>
<div class="ln" style="top:471px">38</div>
<div class="cl" style="top:471px">        <span class="m">&lt;?php</span></div>
<div class="ln" style="top:489px">39</div>
<div class="cl" style="top:489px">        <span class="k">if</span>(<span class="v">$wishlist_id</span> != <span class="n">0</span>)</div>
<div class="ln" style="top:507px">40</div>
<div class="cl" style="top:507px">            <span class="k">echo</span> <span class="v">$this</span>-&gt;cartClass-&gt;displayButton(JText::_(<span class="s">'DISPLAY_THE_WISHLIST'</span>),<span class="s">'wishlist'</span>,<span class="v">$this</span>-&gt;params,hikashop_completeLink(<span class="s">'cart&amp;task=showcart&amp;cart_id='</span>.<span class="v">$wishlist_id</span>.<span class="s">'&amp;cart_type='</span>.<span class="v">$cart_type</span>.<span class="v">$this</span>-</div>
<div class="cl" style="top:525px">&gt;url_itemid),<span class="s">'window.top.location = \''</span>.hikashop_completeLink(<span class="s">'cart&amp;task=showcart&amp;cart_id='</span>.<span class="v">$wishlist_id</span>.<span class="s">'&amp;cart_type='</span>.<span class="v">$cart_type</span>.<span class="v">$this</span>-&gt;url_itemid).<span class="s">'\';return false;'</span>);</div>
<div class="ln" style="top:543px">41</div>
<div class="cl" style="top:543px">        <span class="k">else</span></div>
<div class="ln" style="top:561px">42</div>
<div class="cl" style="top:561px">            <span class="k">echo</span> <span class="v">$this</span>-&gt;cartClass-&gt;displayButton(JText::_(<span class="s">'DISPLAY_THE_WISHLISTS'</span>),<span class="s">'wishlist'</span>,<span class="v">$this</span>-&gt;params,hikashop_completeLink(<span class="s">'cart&amp;task=showcarts&amp;cart_type='</span>.<span class="v">$cart_type</span>.<span class="v">$this</span>-&gt;url_itemid),<span class="s">'window.top.location = </span></div>
<div class="cl" style="top:579px"><span class="s">\''</span>.hikashop_completeLink(<span class="s">'cart&amp;task=showcarts&amp;cart_type='</span>.<span class="v">$cart_type</span>.<span class="v">$this</span>-&gt;url_itemid).<span class="s">'\';return false;'</span>);</div>
<div id="esb" class="abs"></div><div id="esbt" class="abs"></div><div class="abs car" style="left:1835.5px;top:7px;border-top:0;border-bottom:5px solid #505050;border-left-width:4.5px;border-right-width:4.5px"></div><div class="abs car" style="left:1835.5px;top:589px;border-top:5px solid #505050;border-left-width:4.5px;border-right-width:4.5px"></div></div>
<!-- BOTTOM -->
<div class="tx" style="left:781px;top:1006.14px;font-family:'Liberation Sans',Arial,sans-serif;font-size:12px;line-height:16px;height:16px;letter-spacing:0.464px;color:#8ac6ea;">HikaShop Starter 2.3.2, Joomla!™ Online Store Component</div>
<div id="status" class="abs"></div>
<svg class="ic" style="left:15px;top:1031px" width="12" height="11" viewBox="0 0 12 11"><path d="M8.5,6.5 V9.5 H1 V3 H4" stroke="#9b9b9b" stroke-width="1.8" fill="none"/><path d="M4.5,7 Q5,3.5 8,3.5 V1 L12,4.5 L8,8 V5.8 Q6,5.8 4.5,7Z" fill="#9b9b9b"/></svg><div class="tx" style="left:31.5px;top:1028.84px;font-family:'Liberation Sans',Arial,sans-serif;font-size:12px;line-height:16px;height:16px;letter-spacing:0.137px;color:#9b9b9b;">Voir le site</div><div class="abs bdg" style="left:99px"></div><div class="tx" style="left:107.5px;top:1030.19px;font-family:'Liberation Sans',Arial,sans-serif;font-size:11px;line-height:14px;height:14px;font-weight:700;color:#fff;">0</div><div class="tx" style="left:126px;top:1028.84px;font-family:'Liberation Sans',Arial,sans-serif;font-size:12px;line-height:16px;height:16px;letter-spacing:0.189px;color:#9b9b9b;">Visiteurs</div><div class="abs bdg" style="left:179px"></div><div class="tx" style="left:187.7px;top:1030.19px;font-family:'Liberation Sans',Arial,sans-serif;font-size:11px;line-height:14px;height:14px;font-weight:700;color:#fff;">1</div><div class="tx" style="left:206px;top:1028.84px;font-family:'Liberation Sans',Arial,sans-serif;font-size:12px;line-height:16px;height:16px;letter-spacing:0.097px;color:#9b9b9b;">Admin</div><svg class="ic" style="left:246px;top:1032px" width="12.5" height="8" viewBox="0 0 13 10" preserveAspectRatio="none"><rect width="13" height="10" rx="1" fill="#9b9b9b"/><path d="M0.5,1 L6.5,6 L12.5,1 M0.5,9.5 L4.5,5 M12.5,9.5 L8.5,5" stroke="#ebebeb" stroke-width="1" fill="none"/></svg><div class="abs bdg" style="left:263px"></div><div class="tx" style="left:271.7px;top:1030.19px;font-family:'Liberation Sans',Arial,sans-serif;font-size:11px;line-height:14px;height:14px;font-weight:700;color:#fff;">0</div><div class="abs" style="left:291.5px;top:1034px;width:12px;height:3px;background:#9b9b9b"></div><div class="tx" style="left:309px;top:1028.84px;font-family:'Liberation Sans',Arial,sans-serif;font-size:12px;line-height:16px;height:16px;letter-spacing:0.131px;color:#9b9b9b;">Déconnexion</div><div class="tx" style="left:1682.5px;top:1028.84px;font-family:'Liberation Sans',Arial,sans-serif;font-size:12px;line-height:16px;height:16px;letter-spacing:0.105px;color:#9b9b9b;">Joomla! 3.3.3  —  © 2014 ma-popote.fr</div>
<div id="vsb" class="abs"></div><div id="vsbt" class="abs"></div><div class="abs car" style="left:1907.5px;top:92px;border-top:0;border-bottom:5px solid #c3c3c3;border-left-width:4.5px;border-right-width:4.5px"></div><div class="abs car" style="left:1907.5px;top:1041px;border-top:5px solid #505050;border-left-width:4.5px;border-right-width:4.5px"></div>
<div id="task" class="abs"></div>
<div class="abs" style="left:2px;top:1054px;width:78px;height:22px;background:#d4d0c8;border:1px solid;border-color:#fff #404040 #404040 #fff;box-shadow:inset -1px -1px 0 #808080"></div><svg class="ic" style="left:5px;top:1056px" width="17" height="17" viewBox="0 0 17 17"><path d="M2,3 Q5,1 8,3 L7,8 Q4,6 1,8Z" fill="#e8502a"/><path d="M9,3.5 Q12,5.5 15.5,3.5 L14.5,8.5 Q11.5,10.5 8,8.5Z" fill="#58a838"/><path d="M0.8,9 Q4,7 6.8,9 L5.8,14 Q3,12 0,14Z" fill="#3a6ed8"/><path d="M7.8,9.5 Q11,11.5 14.3,9.5 L13.3,14.5 Q10,16.5 6.8,14.5Z" fill="#f4c020"/></svg><div class="tx" style="left:22px;top:1059.09px;font-family:'DejaVu Sans Condensed','DejaVu Sans',sans-serif;font-size:11px;line-height:14px;height:14px;font-weight:700;letter-spacing:0.090px;color:#000;">Démarrer</div><div class="abs" style="left:85px;top:1054px;width:160px;height:22px;background:#fff;background-image:repeating-conic-gradient(#d4d0c8 0% 25%, #ffffff 0% 50%);background-size:2px 2px;border:1px solid;border-color:#404040 #fff #fff #404040;box-shadow:inset 1px 1px 0 #808080"></div><svg class="ic" style="left:90px;top:1057px" width="16" height="16" viewBox="0 0 16 16"><circle cx="8" cy="8" r="7.5" fill="#e43d30"/><path d="M8,8 L1.5,4.2 A7.5,7.5 0 0 0 8,15.5Z" fill="#4caf50"/><path d="M8,8 L8,15.5 A7.5,7.5 0 0 0 14.5,4.2Z" fill="#fbc02d"/><path d="M8,8 L14.5,4.2 A7.5,7.5 0 0 0 1.5,4.2Z" fill="#e43d30"/><circle cx="8" cy="8" r="3.6" fill="#fff"/><circle cx="8" cy="8" r="2.8" fill="#3f7fe0"/></svg><div class="tx" style="left:109px;top:1059.09px;font-family:'DejaVu Sans Condensed','DejaVu Sans',sans-serif;font-size:11px;line-height:14px;height:14px;font-weight:700;letter-spacing:-0.001px;color:#000;">ma-popote.fr - Admin...</div><div class="abs" style="left:1814px;top:1058px;width:16px;height:16px;background:#16246a"></div><div class="tx" style="left:1815px;top:1060.27px;font-family:'DejaVu Sans Condensed','DejaVu Sans',sans-serif;font-size:10.5px;line-height:14px;height:14px;letter-spacing:0.500px;color:#fff;">FR</div><div class="abs" style="left:1835px;top:1054px;width:2px;height:24px;border-left:1px solid #808080;border-right:1px solid #fff"></div><div class="abs" style="left:1841px;top:1054px;width:76px;height:24px;border:1px solid;border-color:#808080 #fff #fff #808080"></div><div class="tx" style="left:1845.5px;top:1058.25px;font-family:'DejaVu Sans Condensed','DejaVu Sans',sans-serif;font-size:12px;line-height:16px;height:16px;font-weight:700;color:#000;">«</div><svg class="ic" style="left:1858px;top:1057px" width="17" height="17" viewBox="0 0 17 17"><rect x="1" y="4" width="15" height="12" rx="2" fill="#2eb82e"/><path d="M4,10 L7,13 L13,3" stroke="#fff" stroke-width="2.2" fill="none"/><path d="M9,1 L15,1 L13,5" fill="#1d8a1d"/></svg><div class="tx" style="left:1881.5px;top:1060.09px;font-family:'DejaVu Sans Condensed','DejaVu Sans',sans-serif;font-size:11px;line-height:14px;height:14px;letter-spacing:-0.203px;color:#000;">07:48</div>
</body>
</html>
